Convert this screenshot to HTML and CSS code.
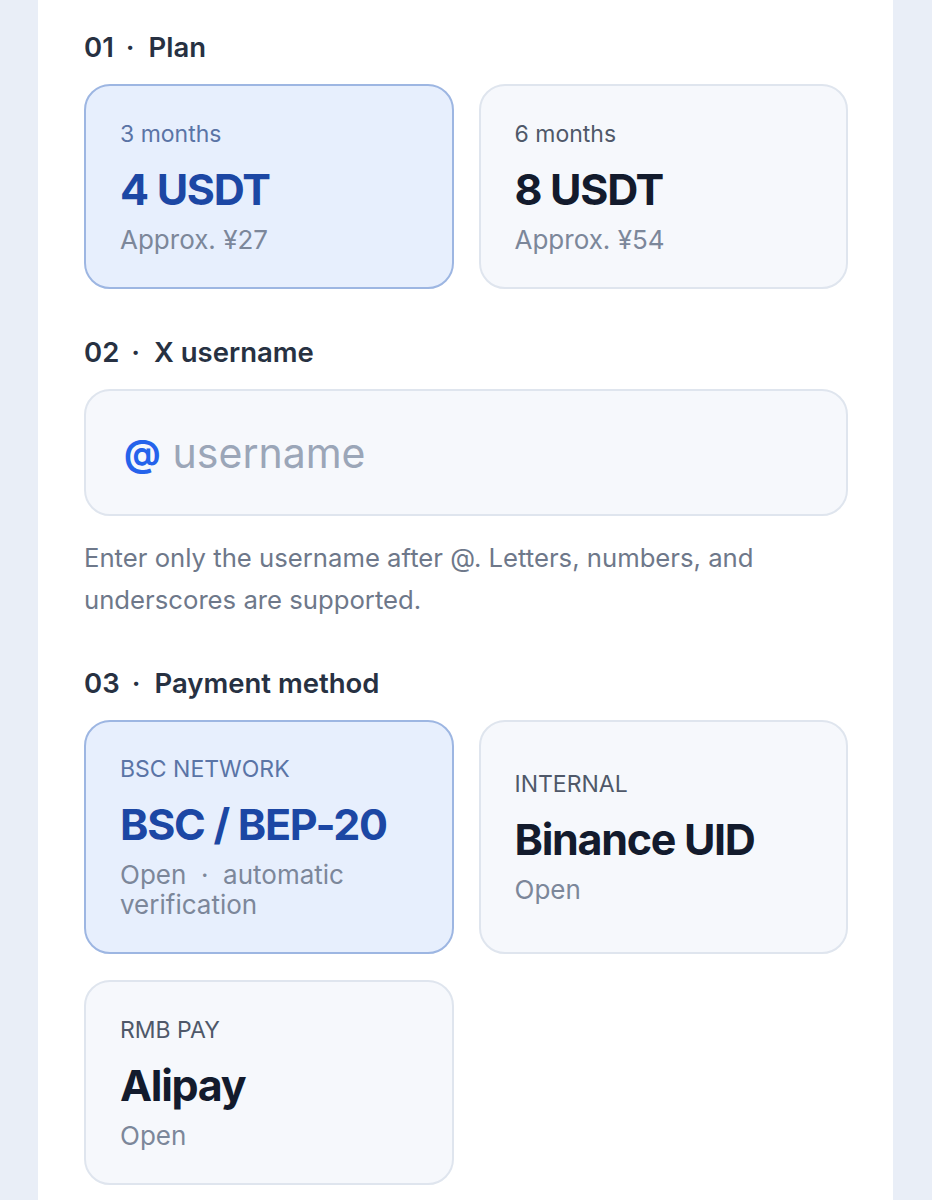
FILE: index.html
```html
<!DOCTYPE html>
<html lang="en">
<head>
<meta charset="utf-8">
<title>Subscribe</title>
<link rel="stylesheet" href="styles.css">
</head>
<body>
<main class="sheet">
  <section class="section">
    <h2 class="step"><span class="num">01</span><span class="dot">·</span><span>Plan</span></h2>
    <div class="grid">
      <div class="option selected">
        <div class="label">3 months</div>
        <div class="title">4 USDT</div>
        <div class="sub">Approx. ¥27</div>
      </div>
      <div class="option">
        <div class="label">6 months</div>
        <div class="title">8 USDT</div>
        <div class="sub">Approx. ¥54</div>
      </div>
    </div>
  </section>

  <section class="section section-user">
    <h2 class="step"><span class="num">02</span><span class="dot">·</span><span>X username</span></h2>
    <label class="field">
      <span class="at">@</span>
      <input class="input" type="text" placeholder="username">
    </label>
    <p class="help">Enter only the username after @. Letters, numbers, and underscores are supported.</p>
  </section>

  <section class="section">
    <h2 class="step"><span class="num">03</span><span class="dot">·</span><span>Payment method</span></h2>
    <div class="grid">
      <div class="option selected">
        <div class="label">BSC NETWORK</div>
        <div class="title">BSC / BEP-20</div>
        <div class="sub">Open&nbsp; ·&nbsp; automatic verification</div>
      </div>
      <div class="option">
        <div class="label">INTERNAL</div>
        <div class="title">Binance UID</div>
        <div class="sub">Open</div>
      </div>
      <div class="option">
        <div class="label">RMB PAY</div>
        <div class="title">Alipay</div>
        <div class="sub">Open</div>
      </div>
    </div>
  </section>
</main>
</body>
</html>
```

FILE: styles.css
```css
* { box-sizing: border-box; }

html, body {
  margin: 0;
  padding: 0;
}

body {
  background: #e9eef7;
  font-family: Inter, "Noto Sans", "Liberation Sans", sans-serif;
  color: #1f2937;
}

.sheet {
  margin: 0 39px 0 38px;
  background: #ffffff;
  padding: 30px 45px 40px 46px;
  min-height: 1200px;
}

.section {
  margin-bottom: 46px;
}

.section-user {
  margin-bottom: 45px;
}

.step {
  margin: 0 0 20px;
  font-size: 27.5px;
  line-height: 34px;
  font-weight: 600;
  color: #273142;
  display: flex;
  align-items: center;
}

.step .dot {
  margin: 0 14px 0 12px;
}

.grid {
  display: grid;
  grid-template-columns: 1fr 1fr;
  column-gap: 25px;
  row-gap: 26px;
}

.option {
  border: 2px solid #dfe5ee;
  background: #f6f8fc;
  border-radius: 26px;
  padding: 32px 34px;
  display: flex;
  flex-direction: column;
  justify-content: center;
  min-height: 205px;
}

.option.selected {
  background: #e7effd;
  border-color: #9db6e2;
}

.label {
  font-size: 23px;
  line-height: 30px;
  color: #4f5869;
}

.option.selected .label {
  color: #5a74a6;
}

.title {
  margin-top: 15px;
  font-size: 43px;
  line-height: 50px;
  font-weight: 700;
  letter-spacing: -0.03em;
  color: #131b2d;
}

.option.selected .title {
  color: #1c47a4;
}

.sub {
  margin-top: 11px;
  font-size: 26px;
  line-height: 30px;
  color: #7c879a;
}

.field {
  display: flex;
  align-items: center;
  height: 127px;
  border: 2px solid #dfe5ee;
  background: #f6f8fc;
  border-radius: 26px;
  padding: 0 36px 0 38px;
}

.at {
  font-size: 36px;
  font-weight: 700;
  color: #2563eb;
  margin-right: 12px;
  line-height: 1;
}

.input {
  flex: 1;
  border: 0;
  outline: 0;
  background: transparent;
  font-family: inherit;
  font-size: 41px;
  color: #1f2937;
  padding: 0;
  min-width: 0;
}

.input::placeholder {
  color: #9ba6b8;
}

.help {
  margin: 21px 0 0;
  font-size: 25.7px;
  line-height: 42px;
  color: #6e788a;
}
```
